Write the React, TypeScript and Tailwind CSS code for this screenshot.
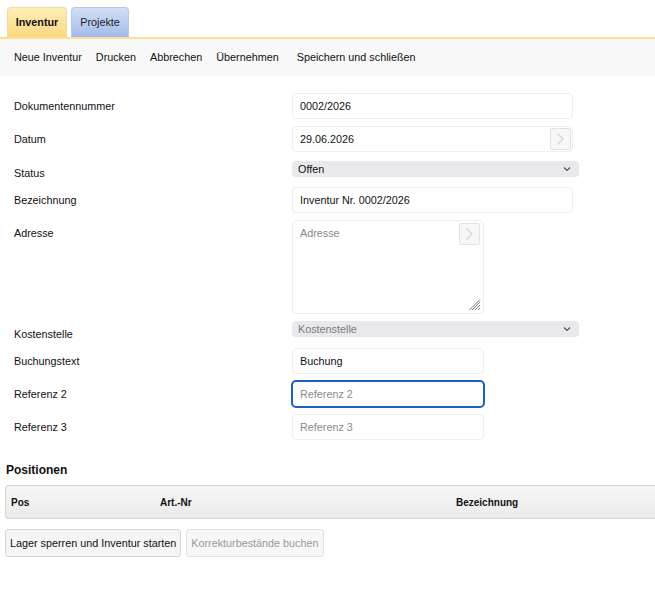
import React from 'react';

const font = { fontFamily: '"Liberation Sans", Arial, sans-serif' };

const Arrow = () => (
  <span className="flex items-center justify-center w-[21px] h-[22px] border border-[#e2e2e2] rounded-[2px] bg-[#f7f7f7]">
    <svg width="9" height="14" viewBox="0 0 9 14" fill="none">
      <path d="M1.5 1.5 L7 7 L1.5 12.5" stroke="#d4d4d4" strokeWidth="1.3" />
    </svg>
  </span>
);

const Chevron = () => (
  <svg width="8" height="6" viewBox="0 0 8 6" fill="none">
    <path d="M1 1.5 L4 4.5 L7 1.5" stroke="#555" strokeWidth="1.2" />
  </svg>
);

const Label: React.FC<{ children: React.ReactNode; className?: string }> = ({ children, className }) => (
  <div className={`w-[292px] shrink-0 pl-[14px] text-[10.8px] text-[#111] ${className ?? ''}`}>{children}</div>
);

const Field: React.FC<{ value?: string; placeholder?: string; wide?: boolean; arrow?: boolean }> = ({ value, placeholder, wide, arrow }) => (
  <div className={`h-[26px] ${wide ? 'w-[281px]' : 'w-[192px]'} border border-[#efefef] rounded-[4px] bg-white flex items-center pl-[7px] pr-[1px] text-[10.8px]`}>
    <span className={`flex-1 ${value ? 'text-[#111]' : 'text-[#8a8a8a]'}`}>{value ?? placeholder}</span>
    {arrow && <Arrow />}
  </div>
);

const Select: React.FC<{ value: string; muted?: boolean }> = ({ value, muted }) => (
  <div className="h-[16px] w-[287px] rounded-[4px] bg-[#e9e9ed] flex items-center pl-[6px] pr-[8px] text-[10.8px]">
    <span className={`flex-1 ${muted ? 'text-[#7a7a7a]' : 'text-[#111]'}`}>{value}</span>
    <Chevron />
  </div>
);

export default function App() {
  return (
    <div className="w-[655px] h-[599px] bg-white overflow-hidden" style={font}>
      {/* Tabs */}
      <div className="flex items-end gap-[4px] pl-[7px] pt-[7px] h-[37px]">
        <div className="h-[30px] w-[60px] rounded-t-[4px] bg-gradient-to-b from-[#fdeeb8] to-[#fcd881] border border-b-0 border-[#f3dc9a] flex items-center justify-center text-[10.8px] font-bold text-[#111]">
          Inventur
        </div>
        <div className="h-[30px] w-[58px] rounded-t-[4px] bg-gradient-to-b from-[#d3def7] to-[#a3bbea] border border-b-0 border-[#b7c8ee] flex items-center justify-center text-[10.8px] text-[#222]">
          Projekte
        </div>
      </div>
      <div className="h-[2px] bg-[#fde08f]" />

      {/* Toolbar */}
      <div className="h-[37px] bg-[#f8f8f8] flex items-center pl-[14px] text-[10.8px] text-[#111]">
        <span className="mr-[14px]">Neue Inventur</span>
        <span className="mr-[14px]">Drucken</span>
        <span className="mr-[14px]">Abbrechen</span>
        <span className="mr-[18px]">Übernehmen</span>
        <span>Speichern und schließen</span>
      </div>

      {/* Form */}
      <div className="pt-[17px] flex flex-col">
        <div className="flex items-center h-[26px]">
          <Label>Dokumentennummer</Label>
          <Field value="0002/2026" wide />
        </div>
        <div className="flex items-center h-[26px] mt-[7px]">
          <Label>Datum</Label>
          <Field value="29.06.2026" wide arrow />
        </div>
        <div className="flex items-center h-[16px] mt-[9px]">
          <Label className="pt-[8px]">Status</Label>
          <Select value="Offen" />
        </div>
        <div className="flex items-center h-[26px] mt-[10px]">
          <Label>Bezeichnung</Label>
          <Field value="Inventur Nr. 0002/2026" wide />
        </div>
        <div className="flex items-start mt-[7px]">
          <Label className="pt-[5px]">Adresse</Label>
          <div className="relative h-[94px] w-[192px] border border-[#efefef] rounded-[4px] bg-white pl-[7px] pt-[4px] text-[10.8px] text-[#8a8a8a]">
            Adresse
            <div className="absolute top-[2px] right-[3px]">
              <Arrow />
            </div>
            <svg className="absolute bottom-[2px] right-[2px]" width="12" height="12" viewBox="0 0 12 12">
              <path d="M11 3 L3 11 M11 6 L6 11 M11 9 L9 11 M11 0.5 L0.5 11" stroke="#777" strokeWidth="1" />
            </svg>
          </div>
        </div>
        <div className="flex items-center h-[16px] mt-[7px]">
          <Label className="pt-[10px]">Kostenstelle</Label>
          <Select value="Kostenstelle" muted />
        </div>
        <div className="flex items-center h-[26px] mt-[11px]">
          <Label>Buchungstext</Label>
          <Field value="Buchung" />
        </div>
        <div className="flex items-center h-[26px] mt-[7px]">
          <Label>Referenz 2</Label>
          <div className="h-[28px] w-[194px] -ml-[1px] border-2 border-[#1d5fbf] rounded-[5px] bg-white flex items-center pl-[7px] text-[10.8px] text-[#8a8a8a]">
            Referenz 2
          </div>
        </div>
        <div className="flex items-center h-[26px] mt-[7px]">
          <Label>Referenz 3</Label>
          <Field placeholder="Referenz 3" />
        </div>
      </div>

      {/* Positionen */}
      <div className="pl-[6px] mt-[21px] text-[12px] font-bold text-[#111]">Positionen</div>
      <div className="ml-[5px] mt-[6px] h-[34px] border border-r-0 border-[#d4d4d4] rounded-l-[4px] bg-gradient-to-b from-[#f6f6f6] to-[#ebebeb] flex items-center text-[10px] font-bold text-[#111]">
        <span className="pl-[5px] w-[154px]">Pos</span>
        <span className="w-[296px]">Art.-Nr</span>
        <span>Bezeichnung</span>
      </div>
      <div className="flex gap-[5px] ml-[5px] mt-[10px]">
        <div className="h-[28px] px-[4px] border border-[#d6d6d6] rounded-[3px] bg-[#f5f5f5] flex items-center text-[10.8px] text-[#111]">
          Lager sperren und Inventur starten
        </div>
        <div className="h-[28px] px-[4px] border border-[#e2e2e2] rounded-[3px] bg-[#f7f7f7] flex items-center text-[10.8px] text-[#9a9a9a]">
          Korrekturbestände buchen
        </div>
      </div>
    </div>
  );
}
